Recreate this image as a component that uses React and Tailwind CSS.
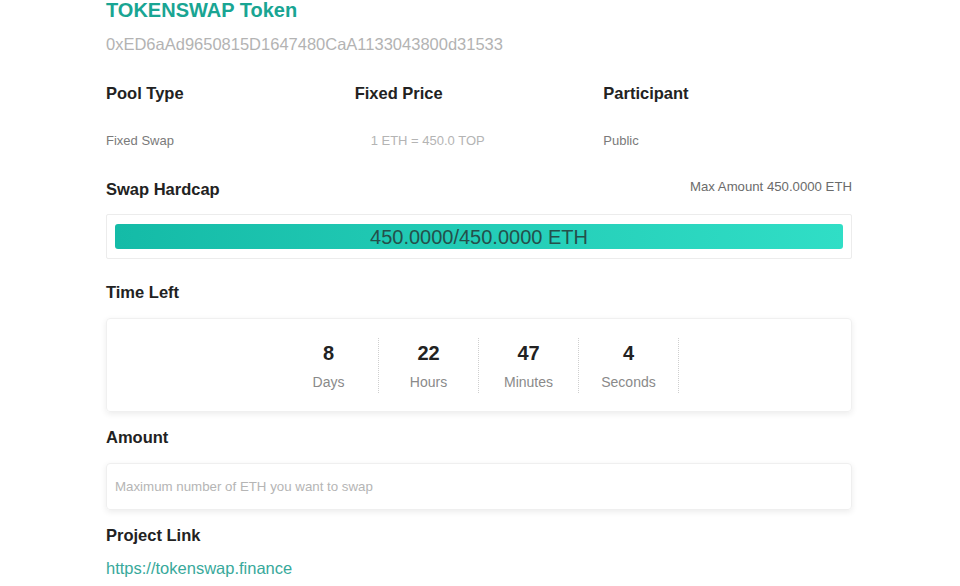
// Token swap pool detail: header, stats grid, hardcap bar, countdown, amount input.
const font = { fontFamily: '"Liberation Sans", Arial, sans-serif' }

const stats = [
  { label: 'Pool Type', value: 'Fixed Swap', valueClass: 'text-[#7a7a7a]' },
  { label: 'Fixed Price', value: '1 ETH = 450.0 TOP', valueClass: 'text-[#b4b4b4] pl-[16px]' },
  { label: 'Participant', value: 'Public', valueClass: 'text-[#7a7a7a]' },
]

const countdown = [
  { n: '8', label: 'Days' },
  { n: '22', label: 'Hours' },
  { n: '47', label: 'Minutes' },
  { n: '4', label: 'Seconds' },
]

export default function App() {
  return (
    <div className="w-[960px] h-[586px] overflow-hidden bg-white" style={font}>
      <div className="ml-[106px] w-[746px] flex flex-col">
        <h1 className="text-[20px] leading-[20px] font-bold text-[#19a593]">TOKENSWAP Token</h1>
        <div className="mt-[14px] text-[16.5px] leading-[20px] text-[#b3b3b3]">
          0xED6aAd9650815D1647480CaA1133043800d31533
        </div>

        {/* Stats */}
        <div className="mt-[29px] grid grid-cols-3">
          {stats.map(s => (
            <div key={s.label} className="flex flex-col">
              <div className="text-[16.5px] leading-[20px] font-bold text-[#222]">{s.label}</div>
              <div className={`mt-[29px] text-[13px] leading-[18px] ${s.valueClass}`}>{s.value}</div>
            </div>
          ))}
        </div>

        {/* Hardcap */}
        <div className="mt-[29px] flex justify-between items-start">
          <div className="text-[16.5px] leading-[20px] font-bold text-[#222]">Swap Hardcap</div>
          <div className="-mt-[1px] text-[13.2px] leading-[18px] text-[#6b6b6b]">Max Amount 450.0000 ETH</div>
        </div>
        <div className="mt-[15px] h-[45px] border border-[#ececec] rounded-[2px] px-[8px] py-[9px]">
          <div className="h-full rounded-[3px] bg-gradient-to-r from-[#14bba7] to-[#30dec6] flex items-center justify-center">
            <span className="text-[20px] leading-[22px] text-[#24504b]">450.0000/450.0000 ETH</span>
          </div>
        </div>

        {/* Countdown */}
        <div className="mt-[23px] text-[16.5px] leading-[20px] font-bold text-[#222]">Time Left</div>
        <div className="mt-[16px] h-[94px] rounded-[4px] border border-[#f0f0f0] shadow-[0_2px_6px_rgba(0,0,0,0.08)] flex justify-center pt-[19px]">
          {countdown.map(c => (
            <div
              key={c.label}
              className="w-[100px] h-[55px] border-r border-dotted border-[#cfcfcf] flex flex-col items-center pt-[3px]"
            >
              <div className="text-[20px] leading-[24px] font-bold text-[#222]">{c.n}</div>
              <div className="mt-[8px] text-[14px] leading-[18px] text-[#8a8a8a]">{c.label}</div>
            </div>
          ))}
        </div>

        {/* Amount */}
        <div className="mt-[15px] text-[16.5px] leading-[20px] font-bold text-[#222]">Amount</div>
        <input
          type="text"
          placeholder="Maximum number of ETH you want to swap"
          className="mt-[16px] h-[47px] w-full rounded-[4px] border border-[#efefef] shadow-[0_2px_6px_rgba(0,0,0,0.08)] px-[8px] text-[13.3px] text-[#333] placeholder:text-[#b5b5b5] outline-none"
          style={font}
        />

        {/* Link */}
        <div className="mt-[15px] text-[16.5px] leading-[20px] font-bold text-[#222]">Project Link</div>
        <a href="#" className="mt-[13px] text-[16.5px] leading-[20px] text-[#38a99b]">https://tokenswap.finance</a>
      </div>
    </div>
  )
}
